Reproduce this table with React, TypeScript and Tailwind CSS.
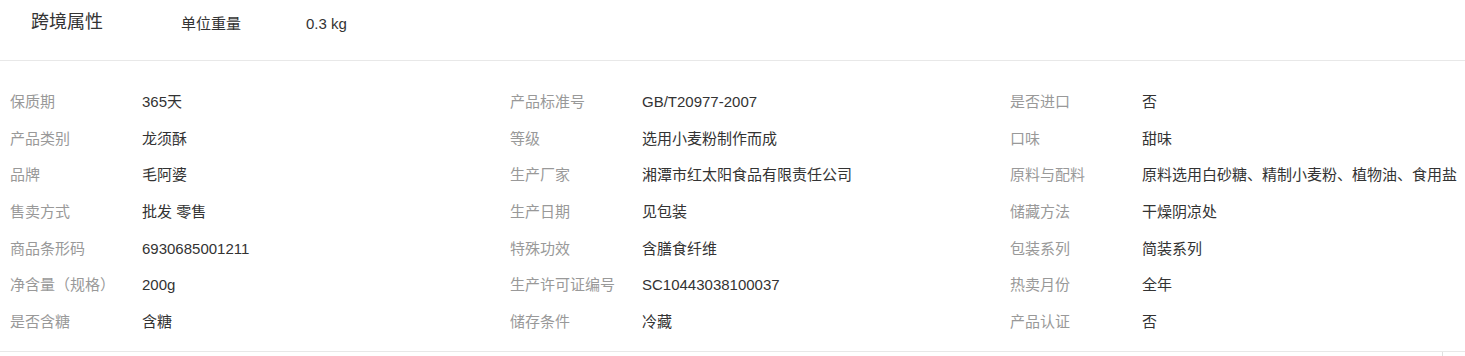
import React from "react";

const rows: [string, string, string, string, string, string][] = [
  ["保质期", "365天", "产品标准号", "GB/T20977-2007", "是否进口", "否"],
  ["产品类别", "龙须酥", "等级", "选用小麦粉制作而成", "口味", "甜味"],
  ["品牌", "毛阿婆", "生产厂家", "湘潭市红太阳食品有限责任公司", "原料与配料", "原料选用白砂糖、精制小麦粉、植物油、食用盐"],
  ["售卖方式", "批发 零售", "生产日期", "见包装", "储藏方法", "干燥阴凉处"],
  ["商品条形码", "6930685001211", "特殊功效", "含膳食纤维", "包装系列", "简装系列"],
  ["净含量（规格）", "200g", "生产许可证编号", "SC10443038100037", "热卖月份", "全年"],
  ["是否含糖", "含糖", "储存条件", "冷藏", "产品认证", "否"],
];

export default function App() {
  return (
    <div
      className="w-[1465px] h-[356px] bg-white overflow-hidden"
      style={{ fontFamily: '"Liberation Sans", "Noto Sans CJK SC", sans-serif' }}
    >
      <div className="h-[61px] flex items-start border-b border-[#e8e8e8]">
        <div className="pl-[31px] pt-[13px] w-[181px] text-[18px] text-[#333] leading-none">跨境属性</div>
        <div className="w-[125px] pt-[16px] text-[15px] text-[#333] leading-none">单位重量</div>
        <div className="pt-[16px] text-[15px] text-[#333] leading-none">0.3 kg</div>
      </div>
      <div className="pt-[22px] pb-[11px] border-b border-[#e8e8e8]">
        <div className="grid grid-cols-[132px_368px_132px_368px_132px_1fr] pl-[10px] auto-rows-[36.7px] items-center text-[15px] leading-none whitespace-nowrap">
          {rows.map((r, i) => (
            <React.Fragment key={i}>
              <div className="text-[#999]">{r[0]}</div>
              <div className="text-[#333]">{r[1]}</div>
              <div className="text-[#999]">{r[2]}</div>
              <div className="text-[#333]">{r[3]}</div>
              <div className="text-[#999]">{r[4]}</div>
              <div className="text-[#333]">{r[5]}</div>
            </React.Fragment>
          ))}
        </div>
      </div>
      <div className="flex justify-end">
        <div className="w-[23px] h-[5px] border-l border-[#e0e0e0]" />
      </div>
    </div>
  );
}
